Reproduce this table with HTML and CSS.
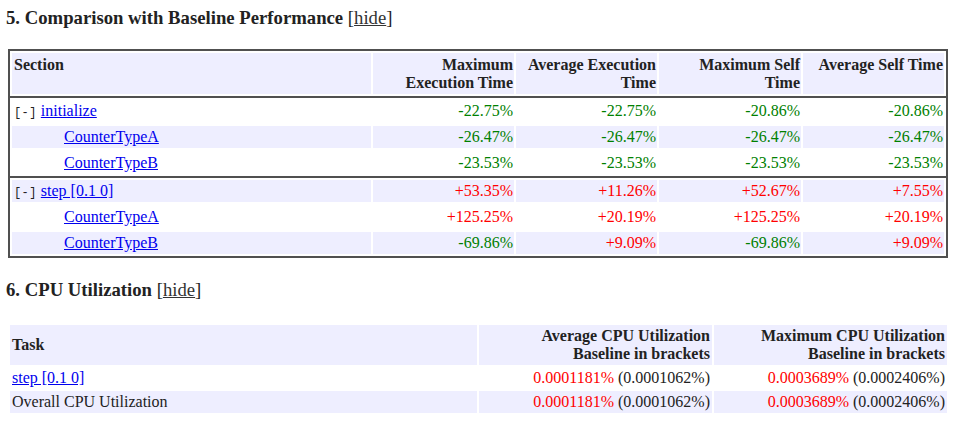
FILE: index.html
```html
<!DOCTYPE html>
<html>
<head>
<meta charset="utf-8">
<link rel="stylesheet" href="styles.css">
</head>
<body>
<h3 class="sec-title">5. Comparison with Baseline Performance <span class="toggle">[<a href="#">hide</a>]</span></h3>
<table class="perf">
  <thead>
    <tr>
      <th class="c-sec">Section</th>
      <th class="c-num">Maximum Execution Time</th>
      <th class="c-num">Average Execution Time</th>
      <th class="c-num c-wide">Maximum Self Time</th>
      <th class="c-num">Average Self Time</th>
    </tr>
  </thead>
  <tbody>
    <tr class="sep"><td colspan="5"></td></tr>
    <tr class="row first">
      <td class="name"><span class="tog">[-]</span> <a href="#">initialize</a></td>
      <td class="good">-22.75%</td><td class="good">-22.75%</td><td class="good">-20.86%</td><td class="good">-20.86%</td>
    </tr>
    <tr class="row alt">
      <td class="name sub"><a href="#">CounterTypeA</a></td>
      <td class="good">-26.47%</td><td class="good">-26.47%</td><td class="good">-26.47%</td><td class="good">-26.47%</td>
    </tr>
    <tr class="row">
      <td class="name sub"><a href="#">CounterTypeB</a></td>
      <td class="good">-23.53%</td><td class="good">-23.53%</td><td class="good">-23.53%</td><td class="good">-23.53%</td>
    </tr>
    <tr class="sep"><td colspan="5"></td></tr>
    <tr class="row first alt">
      <td class="name"><span class="tog">[-]</span> <a href="#">step [0.1 0]</a></td>
      <td class="bad">+53.35%</td><td class="bad">+11.26%</td><td class="bad">+52.67%</td><td class="bad">+7.55%</td>
    </tr>
    <tr class="row">
      <td class="name sub"><a href="#">CounterTypeA</a></td>
      <td class="bad">+125.25%</td><td class="bad">+20.19%</td><td class="bad">+125.25%</td><td class="bad">+20.19%</td>
    </tr>
    <tr class="row alt">
      <td class="name sub"><a href="#">CounterTypeB</a></td>
      <td class="good">-69.86%</td><td class="bad">+9.09%</td><td class="good">-69.86%</td><td class="bad">+9.09%</td>
    </tr>
  </tbody>
</table>

<h3 class="sec-title second">6. CPU Utilization <span class="toggle">[<a href="#">hide</a>]</span></h3>
<table class="cpu">
  <thead>
    <tr>
      <th class="c-task">Task</th>
      <th class="c-util">Average CPU Utilization<br>Baseline in brackets</th>
      <th class="c-util">Maximum CPU Utilization<br>Baseline in brackets</th>
    </tr>
  </thead>
  <tbody>
    <tr>
      <td><a href="#">step [0.1 0]</a></td>
      <td class="val"><span class="bad">0.0001181%</span> (0.0001062%)</td>
      <td class="val"><span class="bad">0.0003689%</span> (0.0002406%)</td>
    </tr>
    <tr class="alt">
      <td>Overall CPU Utilization</td>
      <td class="val"><span class="bad">0.0001181%</span> (0.0001062%)</td>
      <td class="val"><span class="bad">0.0003689%</span> (0.0002406%)</td>
    </tr>
  </tbody>
</table>
</body>
</html>
```
FILE: styles.css
```css
html, body {
  background: #ffffff;
}
body {
  margin: 6px;
  font-family: "Liberation Serif", "Times New Roman", serif;
  font-size: 16px;
  color: #222222;
}
a {
  color: #0000ee;
  text-decoration: underline;
}
.sec-title {
  font-size: 18.72px;
  font-weight: bold;
  line-height: 22px;
  margin: 1px 0 20px 0;
  color: #222222;
}
.sec-title.second {
  margin-top: 21px;
  margin-bottom: 22px;
}
.toggle {
  font-weight: normal;
}
.toggle a {
  color: #333333;
}

/* Comparison table */
.perf {
  margin-left: 2px;
  width: 940px;
  table-layout: fixed;
  border: 2px solid #505050;
  border-spacing: 2px;
  background: #ffffff;
}
.perf th {
  background: #eeeeff;
  font-weight: bold;
  vertical-align: top;
  line-height: 18px;
  padding: 3px 1px 2px 2px;
  height: 36px;
}
.perf th.c-sec {
  width: 356px;
  text-align: left;
}
.perf th.c-num {
  width: 138px;
  text-align: right;
}
.perf th.c-wide {
  width: 139px;
}
.perf td {
  line-height: 18px;
  padding: 2px 1px 2px 2px;
  text-align: right;
  white-space: nowrap;
}
.perf tr.row td {
  background-clip: padding-box;
}
.perf tr.row:not(.first) td {
  border-top: 2px solid transparent;
}
.perf tr.alt td {
  background-color: #eeeeff;
}
.perf td.name {
  text-align: left;
}
.perf td.name.sub {
  padding-left: 52px;
}
.perf tr.sep td {
  height: 2px;
  padding: 0;
  background: #505050;
  box-shadow: -4px 0 0 #505050, 4px 0 0 #505050;
}
.tog {
  font-family: "Liberation Mono", "Courier New", monospace;
  font-size: 12px;
  line-height: 12px;
  letter-spacing: 0.4px;
  color: #222222;
}
.good {
  color: #008000;
}
.bad {
  color: #ff0000;
}

/* CPU table */
.cpu {
  margin-left: 2px;
  width: 941px;
  table-layout: fixed;
  border-spacing: 2px;
}
.cpu th {
  background: #eeeeff;
  font-weight: bold;
  line-height: 18px;
  padding: 2px 2px 2px 2px;
  vertical-align: middle;
}
.cpu th.c-task {
  width: 463px;
  text-align: left;
}
.cpu th.c-util {
  width: 229px;
  text-align: right;
}
.cpu td {
  line-height: 18px;
  padding: 2px 2px;
  white-space: nowrap;
}
.cpu td.val {
  text-align: right;
}
.cpu tr.alt td {
  background: #eeeeff;
}
```
